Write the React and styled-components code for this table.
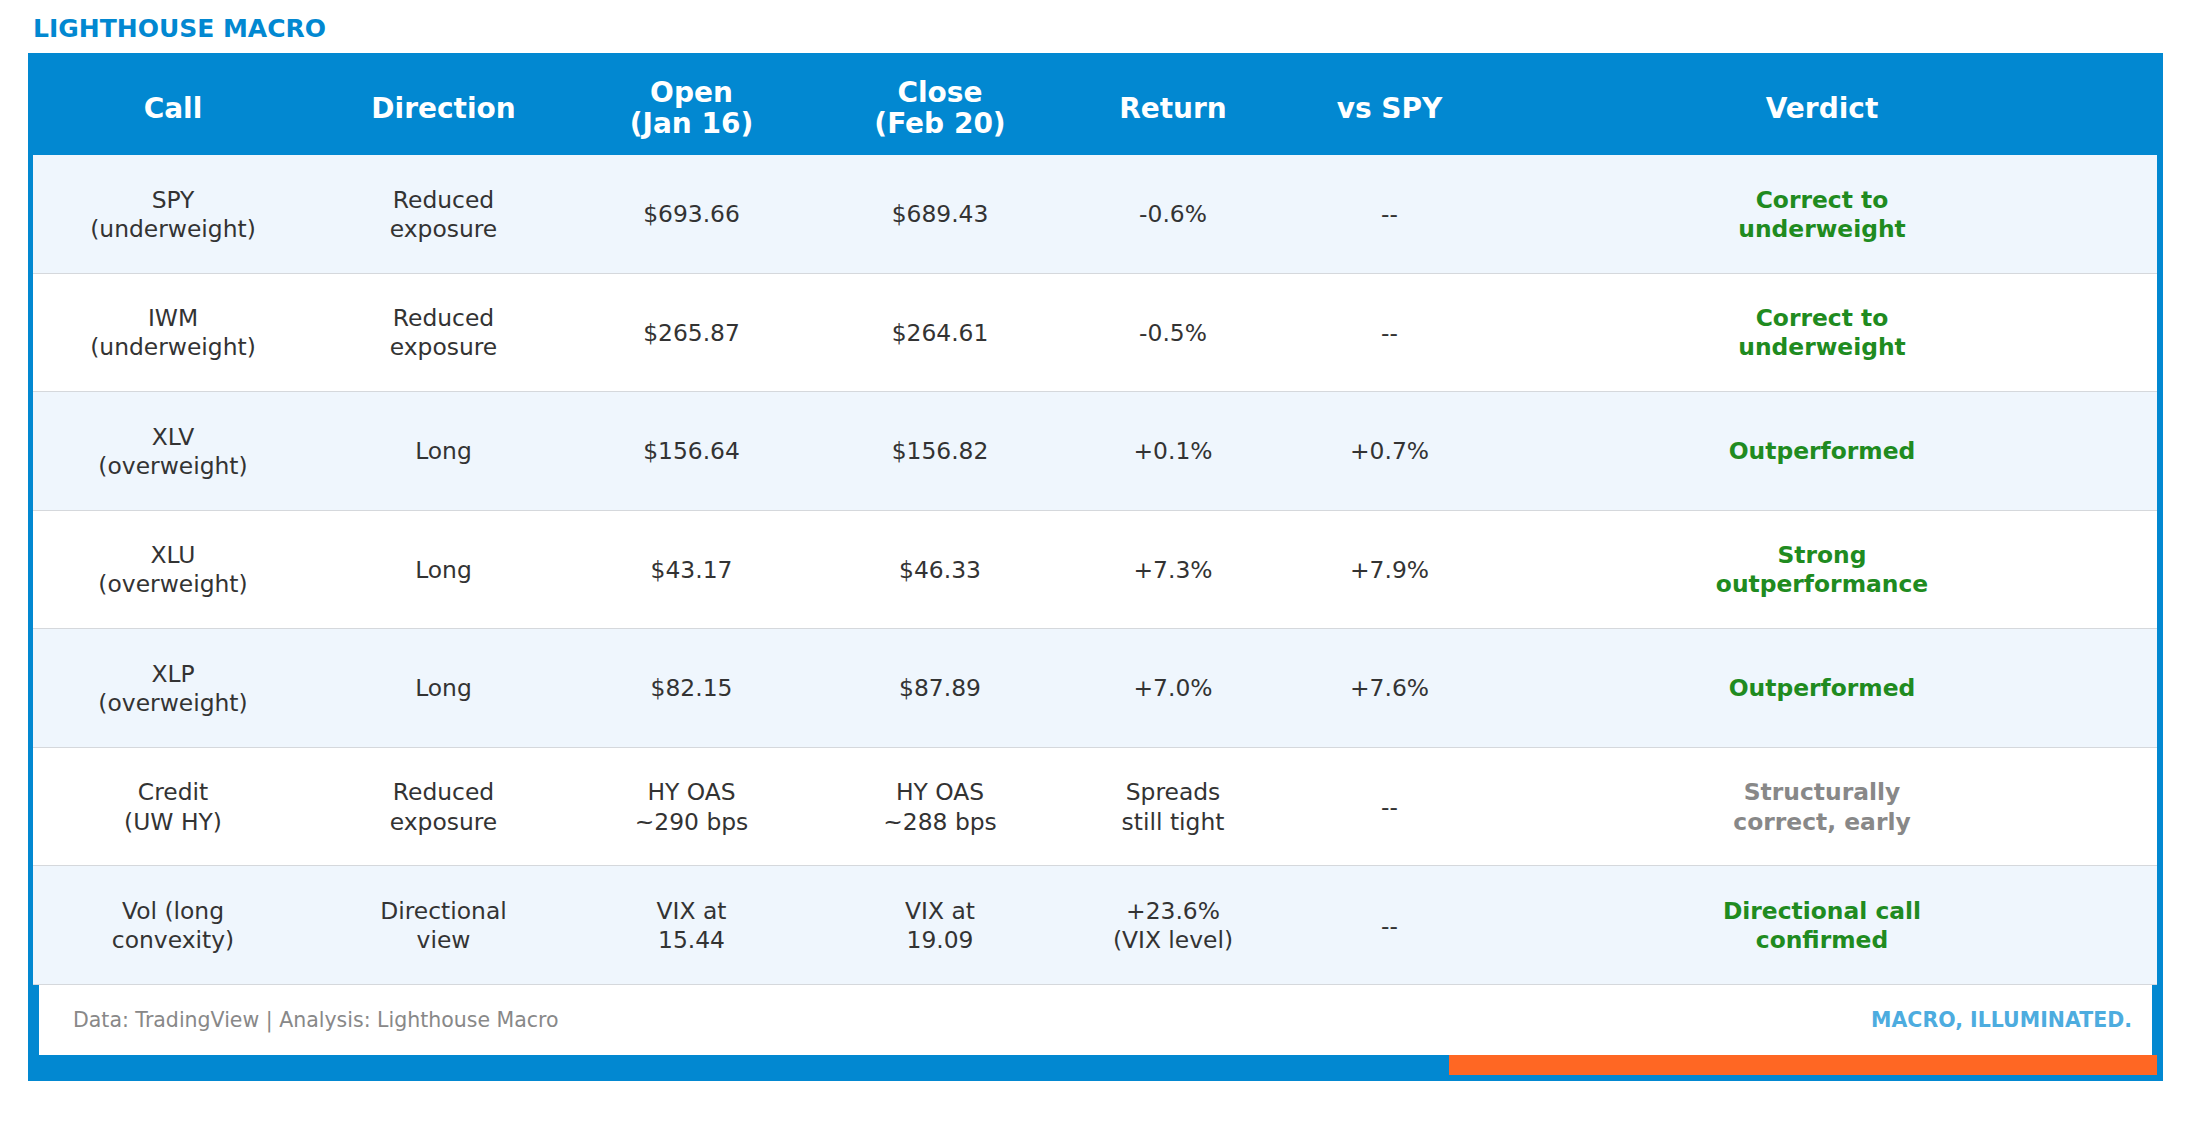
import React from 'react';
import styled, { createGlobalStyle } from 'styled-components';

const BLUE = '#0288D1';
const COLS = '280px 261px 235px 262px 204px 229px 1fr';

const GlobalStyle = createGlobalStyle`
  html, body { margin: 0; padding: 0; background: #ffffff; }
  body { font-family: "DejaVu Sans", "Liberation Sans", sans-serif; }
  * { box-sizing: border-box; }
`;

const Page = styled.div`
  width: 2190px;
  height: 1128px;
  background: #ffffff;
`;

const Brand = styled.div`
  height: 53px;
  padding: 4px 0 0 33px;
  display: flex;
  align-items: center;
  font-family: "DejaVu Sans", sans-serif;
  font-weight: bold;
  font-size: 25px;
  line-height: 1;
  color: ${BLUE};
`;

const Frame = styled.div`
  margin-left: 28px;
  width: 2135px;
  background: ${BLUE};
  display: flex;
  flex-direction: column;
`;

const HeaderRow = styled.div`
  display: grid;
  grid-template-columns: ${COLS};
  height: 102px;
  padding: 8px 6px 0 5px;
`;

const HeaderCell = styled.div`
  display: flex;
  align-items: center;
  justify-content: center;
  text-align: center;
  white-space: pre-line;
  color: #ffffff;
  font-family: "DejaVu Sans", sans-serif;
  font-weight: bold;
  font-size: 28px;
  line-height: 31px;
  padding-right: ${(p) => (p.$last ? '17px' : '0')};
`;

const Body = styled.div`
  padding: 0 6px 0 5px;
  display: flex;
  flex-direction: column;
`;

const Row = styled.div`
  display: grid;
  grid-template-columns: ${COLS};
  height: calc(830px / 7);
  padding-top: 2px;
  background: ${(p) => (p.$alt ? '#EFF6FD' : '#ffffff')};
  border-bottom: 1px solid #D5D8DC;
`;

const Cell = styled.div`
  display: flex;
  align-items: center;
  justify-content: center;
  text-align: center;
  white-space: pre-line;
  font-family: "DejaVu Sans", sans-serif;
  font-size: 23.4px;
  line-height: 1.25;
  color: #333333;
`;

const Verdict = styled(Cell)`
  font-weight: bold;
  padding-right: 17px;
  color: ${(p) => (p.$tone === 'gray' ? '#888888' : '#208B20')};
`;

const Footer = styled.div`
  margin: 0 11px;
  height: 70px;
  background: #ffffff;
  display: flex;
  align-items: center;
  justify-content: space-between;
  padding: 0 20px 0 34px;
  font-family: "DejaVu Sans", sans-serif;
  font-size: 20.5px;
`;

const Source = styled.span`
  color: #888888;
`;

const Tagline = styled.span`
  color: #4DACDF;
  font-weight: bold;
`;

const Band = styled.div`
  height: 26px;
  padding: 0 6px 6px 5px;
  display: grid;
  grid-template-columns: 2fr 1fr;
`;

const Accent = styled.div`
  grid-column: 2;
  background: #FF6723;
`;

const headers = ['Call', 'Direction', 'Open\n(Jan 16)', 'Close\n(Feb 20)', 'Return', 'vs SPY', 'Verdict'];

const rows = [
  ['SPY\n(underweight)', 'Reduced\nexposure', '$693.66', '$689.43', '-0.6%', '--', 'Correct to\nunderweight', 'green'],
  ['IWM\n(underweight)', 'Reduced\nexposure', '$265.87', '$264.61', '-0.5%', '--', 'Correct to\nunderweight', 'green'],
  ['XLV\n(overweight)', 'Long', '$156.64', '$156.82', '+0.1%', '+0.7%', 'Outperformed', 'green'],
  ['XLU\n(overweight)', 'Long', '$43.17', '$46.33', '+7.3%', '+7.9%', 'Strong\noutperformance', 'green'],
  ['XLP\n(overweight)', 'Long', '$82.15', '$87.89', '+7.0%', '+7.6%', 'Outperformed', 'green'],
  ['Credit\n(UW HY)', 'Reduced\nexposure', 'HY OAS\n~290 bps', 'HY OAS\n~288 bps', 'Spreads\nstill tight', '--', 'Structurally\ncorrect, early', 'gray'],
  ['Vol (long\nconvexity)', 'Directional\nview', 'VIX at\n15.44', 'VIX at\n19.09', '+23.6%\n(VIX level)', '--', 'Directional call\nconfirmed', 'green'],
];

export default function App() {
  return (
    <Page>
      <GlobalStyle />
      <Brand>LIGHTHOUSE MACRO</Brand>
      <Frame>
        <HeaderRow>
          {headers.map((h, i) => (
            <HeaderCell key={h} $last={i === headers.length - 1}>{h}</HeaderCell>
          ))}
        </HeaderRow>
        <Body>
          {rows.map((r, i) => (
            <Row key={i} $alt={i % 2 === 0}>
              {r.slice(0, 6).map((c, j) => (
                <Cell key={j}>{c}</Cell>
              ))}
              <Verdict $tone={r[7]}>{r[6]}</Verdict>
            </Row>
          ))}
        </Body>
        <Footer>
          <Source>Data: TradingView | Analysis: Lighthouse Macro</Source>
          <Tagline>MACRO, ILLUMINATED.</Tagline>
        </Footer>
        <Band>
          <Accent />
        </Band>
      </Frame>
    </Page>
  );
}
